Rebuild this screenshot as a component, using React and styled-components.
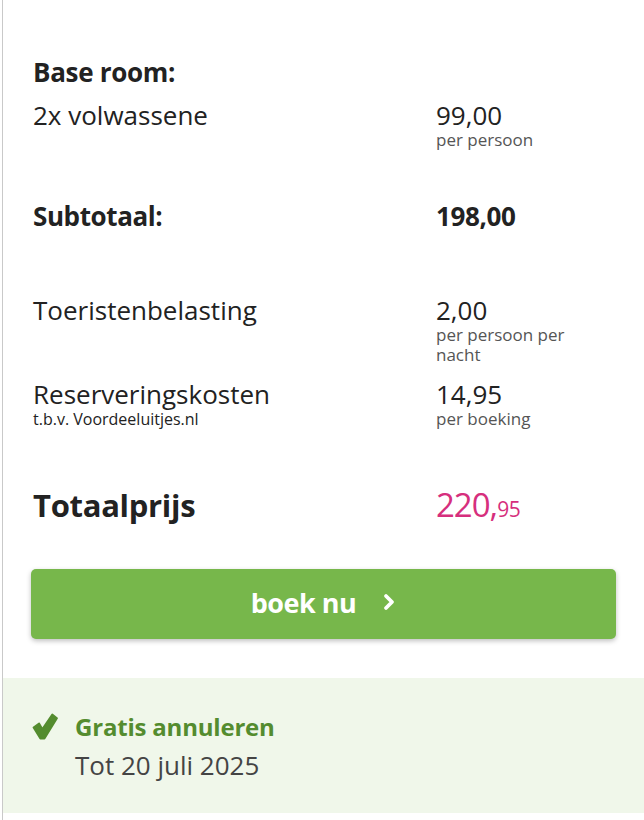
import React from "react";
import styled, { createGlobalStyle } from "styled-components";

const Global = createGlobalStyle`
  html, body { margin: 0; padding: 0; background: #fff; }
  body { font-family: "Open Sans", "Noto Sans", sans-serif; color: #222; }
`;

const Panel = styled.div`
  margin-left: 2px;
  border-left: 1px solid #c9c9c9;
  min-height: 820px;
  box-sizing: border-box;
  padding-top: 57px;
`;

const Body = styled.div`
  padding: 0 28px 0 30px;
  display: flex;
  flex-direction: column;
`;

const Row = styled.div`
  display: grid;
  grid-template-columns: 403px 1fr;
  margin-top: ${(p) => p.$mt || 0}px;
`;

const Heading = styled.div`
  font-size: 26px;
  line-height: 30px;
  font-weight: 700;
  letter-spacing: -0.3px;
`;

const Label = styled.div`
  font-size: 26px;
  line-height: 30px;
  font-weight: ${(p) => (p.$bold ? 700 : 400)};
  letter-spacing: ${(p) => (p.$bold ? "-0.4px" : "0")};
`;

const Note = styled.div`
  font-size: 16px;
  line-height: 20px;
  color: #222;
`;

const Value = styled.div`
  font-size: 26px;
  line-height: 30px;
  font-weight: ${(p) => (p.$bold ? 700 : 400)};
  letter-spacing: ${(p) => (p.$bold ? "-0.4px" : "0")};
`;

const Per = styled.div`
  font-size: 17px;
  line-height: 20px;
  color: #555;
  max-width: 150px;
`;

const TotalRow = styled.div`
  display: grid;
  grid-template-columns: 403px 1fr;
  align-items: baseline;
  margin-top: 56px;
`;

const TotalLabel = styled.div`
  font-size: 31px;
  line-height: 40px;
  font-weight: 700;
  letter-spacing: -0.3px;
`;

const TotalPrice = styled.div`
  color: #d62f7d;
  font-size: 33px;
  line-height: 40px;
  letter-spacing: -1px;
`;

const Cents = styled.span`
  font-size: 21px;
  letter-spacing: -0.5px;
`;

const BookButton = styled.button`
  margin-top: 40px;
  height: 70px;
  width: 585px;
  margin-left: -2px;
  border: none;
  border-radius: 5px;
  background: #77b74b;
  box-shadow: 0 2px 5px rgba(0, 0, 0, 0.25);
  color: #fff;
  font-family: "Open Sans", sans-serif;
  font-weight: 700;
  font-size: 27px;
  letter-spacing: -0.5px;
  display: flex;
  align-items: center;
  justify-content: center;
  gap: 26px;
  padding: 0 0 4px 0;
  cursor: pointer;
`;

const Cancel = styled.div`
  margin-top: 39px;
  background: #f0f7ea;
  height: 135px;
  box-sizing: border-box;
  padding: 33px 0 0 29px;
  display: flex;
  gap: 17px;
  align-items: flex-start;
`;

const CheckWrap = styled.div`
  padding-top: 2px;
  width: 26px;
`;

const CancelText = styled.div`
  display: flex;
  flex-direction: column;
`;

const CancelTitle = styled.div`
  color: #548c2f;
  font-size: 24px;
  line-height: 32px;
  font-weight: 700;
  letter-spacing: -0.2px;
`;

const CancelDate = styled.div`
  color: #444;
  font-size: 26px;
  line-height: 44px;
`;

export default function App() {
  return (
    <>
      <Global />
      <Panel>
        <Body>
          <Heading>Base room:</Heading>
          <Row $mt={13}>
            <Label>2x volwassene</Label>
            <div>
              <Value>99,00</Value>
              <Per>per persoon</Per>
            </div>
          </Row>
          <Row $mt={51}>
            <Label $bold>Subtotaal:</Label>
            <Value $bold>198,00</Value>
          </Row>
          <Row $mt={64}>
            <Label>Toeristenbelasting</Label>
            <div>
              <Value>2,00</Value>
              <Per>per persoon per nacht</Per>
            </div>
          </Row>
          <Row $mt={14}>
            <div>
              <Label>Reserveringskosten</Label>
              <Note>t.b.v. Voordeeluitjes.nl</Note>
            </div>
            <div>
              <Value>14,95</Value>
              <Per>per boeking</Per>
            </div>
          </Row>
          <TotalRow>
            <TotalLabel>Totaalprijs</TotalLabel>
            <TotalPrice>
              220,<Cents>95</Cents>
            </TotalPrice>
          </TotalRow>
          <BookButton>
            <span>boek nu</span>
            <svg width="14" height="18" viewBox="0 0 14 18">
              <path
                d="M4 3 L10 9 L4 15"
                fill="none"
                stroke="#fff"
                strokeWidth="3.8"
                strokeLinecap="round"
                strokeLinejoin="round"
              />
            </svg>
          </BookButton>
        </Body>
        <Cancel>
          <CheckWrap>
            <svg width="26" height="27" viewBox="0 0 25 26">
              <path
                d="M1.5 14 L6.8 10 L10 15.5 L19.5 1.5 L24 5 L12 24.5 L8 24.5 Z"
                fill="#548c2f"
                stroke="#548c2f"
                strokeWidth="1.8"
                strokeLinejoin="round"
              />
            </svg>
          </CheckWrap>
          <CancelText>
            <CancelTitle>Gratis annuleren</CancelTitle>
            <CancelDate>Tot 20 juli 2025</CancelDate>
          </CancelText>
        </Cancel>
      </Panel>
    </>
  );
}
